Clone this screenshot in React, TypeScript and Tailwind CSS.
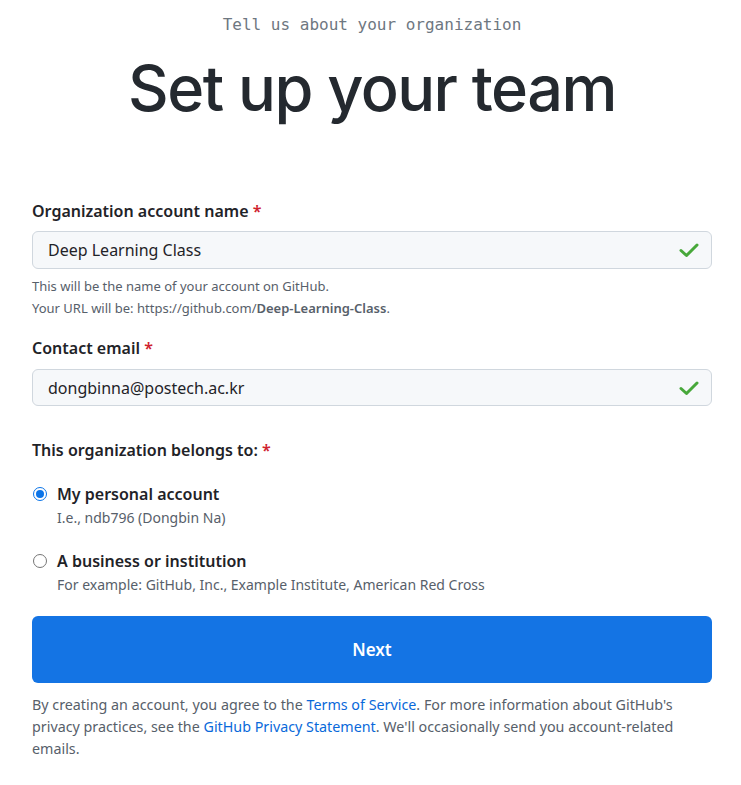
import React from "react";

const Check = () => (
  <svg width="20" height="16" viewBox="0 0 20 16" fill="none">
    <path d="M2 8.5 L7.5 13.5 L18 3" stroke="#47a83a" strokeWidth="3" strokeLinecap="round" strokeLinejoin="round" />
  </svg>
);

export default function App() {
  const sans = { fontFamily: '"Noto Sans", "Open Sans", sans-serif' };
  return (
    <div className="min-h-[785px] bg-white text-[#1f2328]" style={sans}>
      <div className="w-[680px] ml-[32px] flex flex-col">
        <div
          className="text-center text-[16px] text-[#6e7781] pt-[13px] leading-[24px]"
          style={{ fontFamily: '"DejaVu Sans Mono", "Liberation Mono", monospace' }}
        >
          Tell us about your organization
        </div>
        <h1
          className="text-center text-[63px] leading-[80px] font-medium text-[#24292f] mt-[11px] tracking-[-1.5px]"
          style={{ fontFamily: 'Inter, sans-serif' }}
        >
          Set up your team
        </h1>

        <div className="mt-[71px] flex flex-col">
          <label className="text-[16px] font-semibold leading-[24px]">
            Organization account name <span className="text-[#cf222e]">*</span>
          </label>
          <div className="mt-[8px] h-[38px] rounded-[6px] border border-[#d0d7de] bg-[#f6f8fa] flex items-center justify-between pl-[15px] pr-[12px]">
            <span className="text-[16px]">Deep Learning Class</span>
            <Check />
          </div>
          <div className="text-[13px] leading-[22px] text-[#57606a] mt-[6px]">
            <div>This will be the name of your account on GitHub.</div>
            <div>
              Your URL will be: https://github.com/<b className="font-semibold">Deep-Learning-Class</b>.
            </div>
          </div>

          <label className="text-[16px] font-semibold leading-[24px] mt-[17px]">
            Contact email <span className="text-[#cf222e]">*</span>
          </label>
          <div className="mt-[9px] h-[37px] rounded-[6px] border border-[#d0d7de] bg-[#f6f8fa] flex items-center justify-between pl-[15px] pr-[12px]">
            <span className="text-[16px]">dongbinna@postech.ac.kr</span>
            <Check />
          </div>

          <label className="text-[16px] font-semibold leading-[24px] mt-[32px]">
            This organization belongs to: <span className="text-[#cf222e]">*</span>
          </label>

          <div className="mt-[20px] flex items-start gap-[10px]">
            <div className="mt-[5px] ml-[1px] w-[14px] h-[14px] rounded-full border-[1.5px] border-[#0b74e8] bg-white flex items-center justify-center">
              <div className="w-[8px] h-[8px] rounded-full bg-[#0b74e8]" />
            </div>
            <div>
              <div className="text-[16px] font-semibold leading-[24px]">My personal account</div>
              <div className="text-[14px] leading-[24px] text-[#57606a]">I.e., ndb796 (Dongbin Na)</div>
            </div>
          </div>

          <div className="mt-[19px] flex items-start gap-[10px]">
            <div className="mt-[5px] ml-[1px] w-[14px] h-[14px] rounded-full border border-[#767676] bg-white" />
            <div>
              <div className="text-[16px] font-semibold leading-[24px]">A business or institution</div>
              <div className="text-[14px] leading-[24px] text-[#57606a]">
                For example: GitHub, Inc., Example Institute, American Red Cross
              </div>
            </div>
          </div>

          <button className="mt-[19px] h-[67px] rounded-[6px] bg-[#1474e4] text-white text-[17px] font-semibold">
            Next
          </button>

          <p className="mt-[11px] text-[14.3px] leading-[22px] text-[#57606a]">
            By creating an account, you agree to the{" "}
            <span className="text-[#0969da]">Terms of Service</span>. For more information about GitHub's
            privacy practices, see the <span className="text-[#0969da]">GitHub Privacy Statement</span>. We'll
            occasionally send you account-related emails.
          </p>
        </div>
      </div>
    </div>
  );
}
